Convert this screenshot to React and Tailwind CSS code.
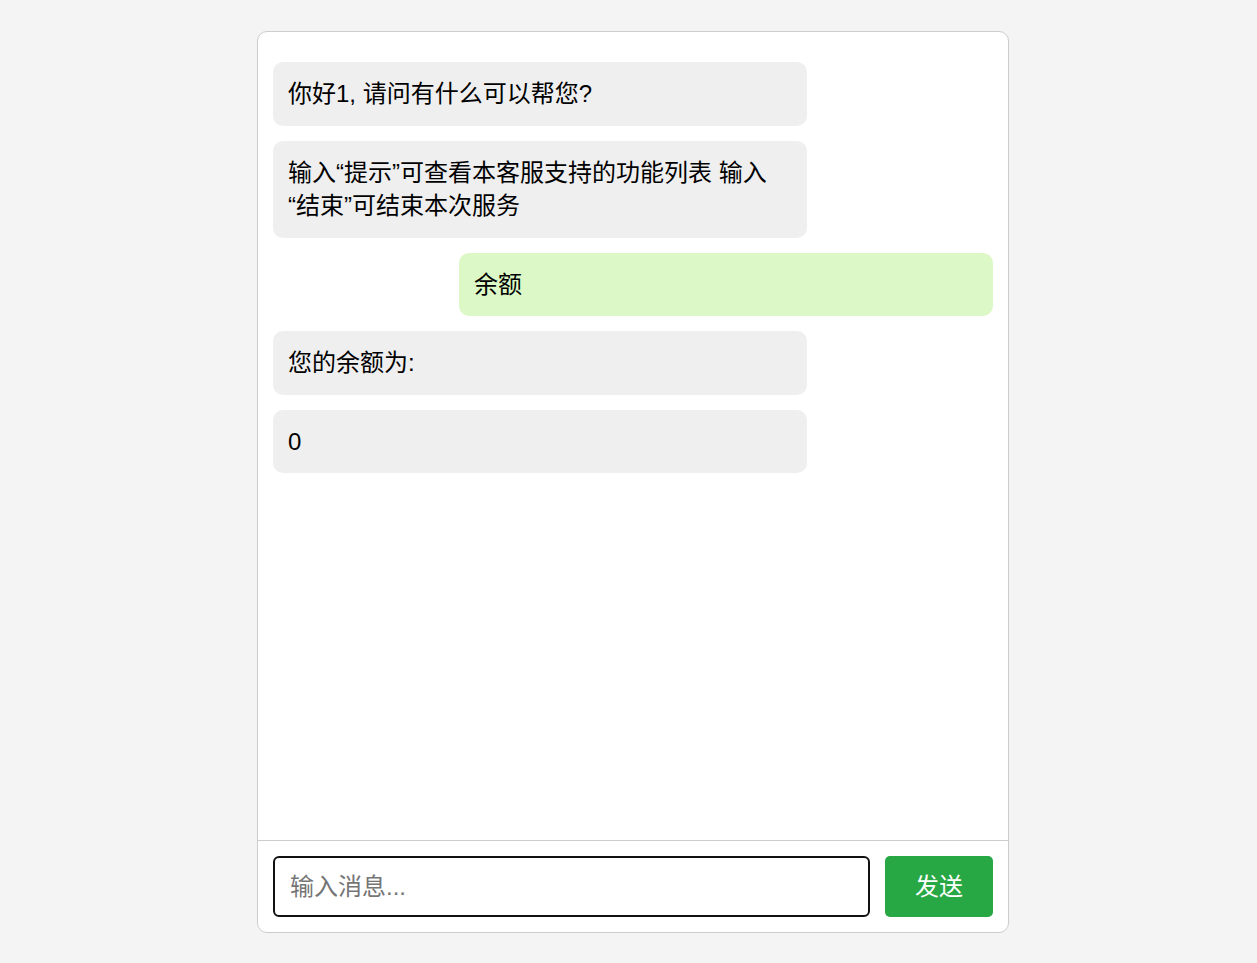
import React from "react";

const font = { fontFamily: '"Liberation Sans", "Noto Sans CJK SC", sans-serif' };

function Bubble({ children, user }) {
  return (
    <div
      className={
        "w-[534px] px-[15px] py-[15px] rounded-[10px] text-[24px] leading-[33.5px] text-black " +
        (user ? "self-end bg-[#dcf8c6]" : "self-start bg-[#efefef]")
      }
    >
      {children}
    </div>
  );
}

export default function App() {
  return (
    <div
      className="min-h-[963px] w-full bg-[#f4f4f4] flex justify-center pl-[9px] pt-[31px]"
      style={font}
    >
      <div className="w-[752px] h-[902px] bg-white border border-[#cccccc] rounded-[10px] flex flex-col overflow-hidden">
        <div className="flex-1 flex flex-col gap-[15px] px-[15px] pt-[30px] pb-[15px]">
          <Bubble>你好1, 请问有什么可以帮您?</Bubble>
          <Bubble>{"输入“提示”可查看本客服支持的功能列表 输入\u200B“结束”可结束本次服务"}</Bubble>
          <Bubble user>余额</Bubble>
          <Bubble>您的余额为:</Bubble>
          <Bubble>0</Bubble>
        </div>
        <div className="border-t border-[#cccccc] p-[15px] flex gap-[15px]">
          <input
            className="flex-1 h-[61px] border-2 border-[#111111] rounded-[6px] px-[15px] text-[24px] text-black placeholder:text-[#757575] outline-none"
            style={font}
            placeholder="输入消息..."
          />
          <button
            className="w-[108px] h-[61px] bg-[#28a745] rounded-[5px] text-white text-[24px]"
            style={font}
          >
            发送
          </button>
        </div>
      </div>
    </div>
  );
}
